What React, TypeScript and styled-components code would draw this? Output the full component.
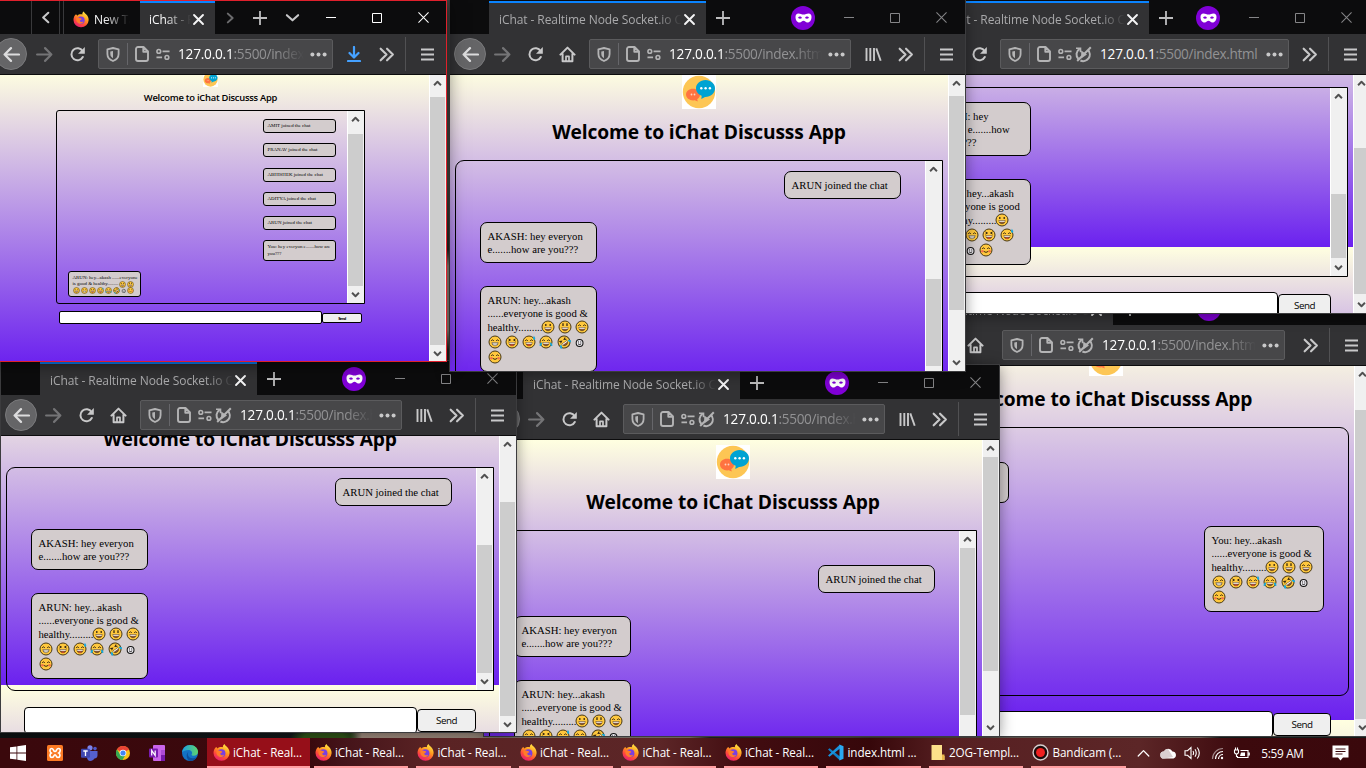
import React from "react";
import styled, { createGlobalStyle, css } from "styled-components";

const ui = `"Open Sans", "Noto Sans", sans-serif`;
const serif = `"Liberation Serif", "Times New Roman", serif`;

const GlobalStyle = createGlobalStyle`
  * { box-sizing: border-box; }
  body { margin: 0; overflow: hidden; background: #000; }
`;

const Desktop = styled.div`
  position: relative;
  width: 1366px;
  height: 768px;
  overflow: hidden;
  display: flex;
  flex-direction: column;
  justify-content: flex-end;
  font-family: ${ui};
  background:
    radial-gradient(ellipse 34px 12px at 324px 738px, #2f5518 60%, transparent) no-repeat,
    linear-gradient(90deg, #0c1112 0, #12181a 300px, #24351c 350px, #a08c7e 362px, #8f8278 690px, #20282a 710px, #6d6258 940px, #8a7d72 1200px, #1b2422 1220px) 0 732px / 100% 6px no-repeat,
    linear-gradient(#4a4b45 0, #53544a 180px, #2e2f2a 250px, #a8978a 266px, #a8978a 330px, #26231f 350px);
`;

/* ---------- window frame ---------- */

const Frame = styled.section<{ $x: number; $y: number; $w: number; $h: number; $z: number; $active?: boolean }>`
  position: absolute;
  left: ${(p) => p.$x}px;
  top: ${(p) => p.$y}px;
  width: ${(p) => p.$w}px;
  height: ${(p) => p.$h}px;
  z-index: ${(p) => p.$z};
  display: flex;
  flex-direction: column;
  background: #0c0c0d;
  box-shadow: ${(p) =>
    p.$active ? "0 0 0 1px #e0202c, 0 2px 18px rgba(0,0,0,.6)" : "0 0 0 1px #3c3c3e, 0 2px 14px rgba(0,0,0,.45)"};
`;

const TitleBar = styled.header<{ $active?: boolean }>`
  flex: none;
  height: ${(p) => (p.$active ? 33 : 34)}px;
  display: flex;
  padding-top: ${(p) => (p.$active ? 0 : 1)}px;
  background: #0c0c0d;
  overflow: hidden;
`;

const TabStrip = styled.div<{ $pad: number }>`
  display: flex;
  flex: 1;
  padding-left: ${(p) => p.$pad}px;
`;

const Tab = styled.div<{ $w: number; $active?: boolean; $pad?: number }>`
  flex: none;
  width: ${(p) => p.$w}px;
  display: flex;
  align-items: center;
  padding: 2px 10px 0 ${(p) => p.$pad ?? 10}px;
  border-top: 2px solid ${(p) => (p.$active ? "#0a84ff" : "transparent")};
  background: ${(p) => (p.$active ? "#323234" : "transparent")};
  color: #f4f4f5;
`;

const TabLabel = styled.span<{ $bright?: boolean }>`
  flex: 1;
  overflow: hidden;
  white-space: nowrap;
  font-size: 12px;
  line-height: 18px;
  letter-spacing: -0.08px;
  color: ${(p) => (p.$bright ? "#f9f9fa" : "#a9a9ab")};
  mask-image: linear-gradient(90deg, #000 calc(100% - 26px), transparent);
`;

const StripCell = styled.div<{ $w: number; $edge?: boolean }>`
  flex: none;
  width: ${(p) => p.$w}px;
  display: flex;
  align-items: center;
  justify-content: center;
  border-right: ${(p) => (p.$edge ? "1px solid #39393b" : "0")};
`;

const PrivateBadge = styled.span`
  align-self: center;
  display: flex;
  align-items: center;
  justify-content: center;
  width: 24px;
  height: 24px;
  margin: 1px 11px 0 0;
  border-radius: 50%;
  background: #8000d7;
`;

const Controls = styled.div<{ $active?: boolean }>`
  display: flex;
  flex: none;
  margin-right: ${(p) => (p.$active ? 0 : 1)}px;
  color: ${(p) => (p.$active ? "#fff" : "#858587")};
`;

const Control = styled.span`
  width: 46px;
  display: flex;
  align-items: center;
  justify-content: center;
`;

const NavBar = styled.nav<{ $pad: number }>`
  flex: none;
  height: 41px;
  display: flex;
  align-items: center;
  padding-left: ${(p) => p.$pad}px;
  background: #323234;
  border-bottom: 1px solid #0c0c0d;
  color: #c8c8c9;
`;

const NavCell = styled.span<{ $w: number; $dim?: boolean; $blue?: boolean }>`
  flex: none;
  width: ${(p) => p.$w}px;
  display: flex;
  align-items: center;
  justify-content: center;
  color: ${(p) => (p.$blue ? "#45a1ff" : p.$dim ? "#747476" : "inherit")};
`;

const BackButton = styled.span`
  flex: none;
  width: 32px;
  height: 32px;
  border-radius: 50%;
  border: 1px solid #7a7a7c;
  background: #656567;
  color: #dcdcdd;
  display: flex;
  align-items: center;
  justify-content: center;
`;

const UrlBar = styled.div<{ $w: number }>`
  flex: none;
  width: ${(p) => p.$w}px;
  height: 30px;
  display: flex;
  align-items: center;
  border: 1px solid #5b5b5d;
  border-radius: 2px;
  background: #474749;
  color: #b4b4b5;
`;

const UrlDivider = styled.span`
  width: 1px;
  height: 22px;
  background: #66666a;
`;

const UrlText = styled.span<{ $fade?: boolean; $gap: number }>`
  flex: 1;
  min-width: 0;
  margin-left: ${(p) => p.$gap}px;
  overflow: hidden;
  white-space: nowrap;
  font-size: 13.6px;
  line-height: 20px;
  letter-spacing: -0.34px;
  color: #929294;
  ${(p) => p.$fade && css`mask-image: linear-gradient(90deg, #000 calc(100% - 28px), transparent);`}
  b { font-weight: 400; color: #fff; letter-spacing: -0.2px; }
`;

const NavDivider = styled.span`
  flex: none;
  width: 1px;
  height: 34px;
  background: #515153;
`;

/* ---------- chat page ---------- */

const Viewport = styled.div`
  flex: 1;
  min-height: 0;
  display: flex;
  overflow: hidden;
`;

const Page = styled.main<{ $start: number; $len: number }>`
  flex: 1;
  min-width: 0;
  overflow: hidden;
  background: linear-gradient(#ffffe0, #6b21ef) 0 ${(p) => p.$start}px / 100% ${(p) => p.$len}px repeat-y;
`;

const PageBody = styled.div<{ $shift: number; $pad: number; $right?: number }>`
  display: flex;
  flex-direction: column;
  margin-top: ${(p) => p.$shift}px;
  padding: 5px ${(p) => p.$right ?? p.$pad}px 0 ${(p) => p.$pad}px;
`;

const LogoBox = styled.div<{ $size: number }>`
  align-self: center;
  flex: none;
  width: ${(p) => p.$size}px;
  height: ${(p) => p.$size}px;
  background: #fff;
  svg { display: block; width: 100%; height: 100%; }
`;

const Heading = styled.h1<{ $small?: boolean }>`
  flex: none;
  align-self: center;
  margin: 0;
  height: ${(p) => (p.$small ? 23 : 51)}px;
  white-space: nowrap;
  font-family: ${ui};
  font-weight: ${(p) => (p.$small ? 600 : 700)};
  font-size: ${(p) => (p.$small ? 9.4 : 19.2)}px;
  letter-spacing: ${(p) => (p.$small ? -0.25 : -0.1)}px;
  line-height: ${(p) => (p.$small ? 22 : 46)}px;
  color: #000;
`;

const ChatBox = styled.div<{ $h: number; $bar?: boolean; $small?: boolean }>`
  flex: none;
  height: ${(p) => p.$h}px;
  display: flex;
  border: 1px solid #000;
  border-radius: ${(p) => (p.$small ? "3px 0 0 3px" : p.$bar ? "9px 0 0 9px" : "9px")};
  overflow: hidden;
`;

const Feed = styled.div<{ $top: number; $gap: number; $side: number; $sideR: number }>`
  flex: 1;
  display: flex;
  flex-direction: column;
  align-items: flex-start;
  gap: ${(p) => p.$gap}px;
  padding: ${(p) => p.$top}px ${(p) => p.$sideR}px 0 ${(p) => p.$side}px;
`;

const Bubble = styled.div<{ $w: number; $mine?: boolean; $small?: boolean }>`
  flex: none;
  width: ${(p) => p.$w}px;
  align-self: ${(p) => (p.$mine ? "flex-end" : "flex-start")};
  padding: ${(p) => (p.$small ? "3px 3.5px" : "6.5px 6.5px")};
  border: 1px solid #000;
  border-radius: ${(p) => (p.$small ? 3 : 7)}px;
  background: #d3cccd;
  font-family: ${serif};
  font-size: ${(p) => (p.$small ? 4.95 : 10.72)}px;
  color: #000;
`;

const Line = styled.div<{ $h: number }>`
  height: ${(p) => p.$h}px;
  line-height: ${(p) => p.$h}px;
  display: flex;
  align-items: center;
  white-space: pre;
`;

const LineText = styled.span<{ $tight?: boolean }>`
  margin-right: ${(p) => (p.$tight ? "-1.7px" : 0)};
`;

const Face = styled.svg<{ $s: number; $gap: number }>`
  flex: none;
  width: ${(p) => p.$s}px;
  height: ${(p) => p.$s}px;
  margin-right: ${(p) => p.$gap}px;
`;

const Form = styled.div<{ $top: number; $left: number }>`
  display: flex;
  align-items: flex-start;
  margin: ${(p) => p.$top}px 0 0 ${(p) => p.$left}px;
`;

const Entry = styled.div<{ $w: number; $h: number }>`
  flex: none;
  width: ${(p) => p.$w}px;
  height: ${(p) => p.$h}px;
  border: 1px solid #000;
  border-radius: ${(p) => (p.$h > 20 ? 4 : 2)}px;
  background: #fff;
`;

const SendButton = styled.div<{ $w: number; $h: number }>`
  flex: none;
  width: ${(p) => p.$w}px;
  height: ${(p) => p.$h}px;
  margin-top: ${(p) => (p.$h > 15 ? 1.5 : 2)}px;
  border: 1px solid #000;
  border-radius: ${(p) => (p.$h > 15 ? 4 : 2)}px;
  background: #efefef;
  display: flex;
  align-items: center;
  justify-content: center;
  font-size: ${(p) => (p.$h > 15 ? 9.8 : 4)}px;
  font-weight: ${(p) => (p.$h > 15 ? 400 : 700)};
  letter-spacing: -0.5px;
  color: #000;
`;

const Rail = styled.div`
  flex: none;
  width: 17px;
  display: flex;
  flex-direction: column;
  background: #f0f0f0;
  border-left: 1px solid #fff;
  overflow: hidden;
`;

const RailArrow = styled.span`
  flex: none;
  height: 17px;
  margin-right: 1px;
  display: flex;
  align-items: center;
  justify-content: center;
  color: #505050;
`;

const RailThumb = styled.span<{ $top: number; $h: number }>`
  flex: none;
  height: ${(p) => p.$h}px;
  margin: ${(p) => p.$top - 17}px 1px auto 0;
  background: #cdcdcd;
`;

/* ---------- taskbar ---------- */

const TaskBar = styled.footer`
  position: relative;
  z-index: 20;
  flex: none;
  height: 30px;
  display: flex;
  background: linear-gradient(90deg, #3a080c 0, #3a090d 310px, #45141a 345px, #5a2324 430px, #5c2627 660px, #420d11 740px, #36070a 870px, #572022 950px, #5c2627 1140px, #3c090d 1240px, #3a080c 1366px);
  color: #fff;
`;

const Pins = styled.div`
  width: 207px;
  display: flex;
  align-items: center;
`;

const Pin = styled.span<{ $w: number }>`
  width: ${(p) => p.$w}px;
  display: flex;
  justify-content: center;
`;

const Task = styled.div<{ $active?: boolean }>`
  flex: none;
  width: 102.5px;
  height: 30px;
  padding: 0 ${(p) => (p.$active ? 0 : 4)}px;
  background: ${(p) => (p.$active ? "#960f19" : "transparent")};
`;

const TaskInner = styled.div<{ $active?: boolean }>`
  height: 30px;
  display: flex;
  align-items: center;
  gap: 3.5px;
  padding-left: ${(p) => (p.$active ? 5.5 : 1)}px;
  border-bottom: 2px solid #ff9da0;
  white-space: nowrap;
  font-size: 11.7px;
  letter-spacing: -0.1px;
`;

const Tray = styled.div`
  flex: 1;
  display: flex;
  align-items: center;
`;

const TrayCell = styled.span<{ $w: number }>`
  flex: none;
  width: ${(p) => p.$w}px;
  display: flex;
  justify-content: center;
`;

const Clock = styled.span`
  flex: none;
  width: 56px;
  text-align: center;
  font-size: 11.8px;
  letter-spacing: -0.3px;
`;

const ShowDesktop = styled.span`
  width: 1px;
  height: 30px;
  margin-left: 13px;
  background: #8a6466;
`;

/* ---------- icons ---------- */

const Stroke = ({ s = 16, w = 2, d, cap = "round" }: { s?: number; w?: number; d: string; cap?: "round" | "butt" }) => (
  <svg width={s} height={s} viewBox="0 0 16 16" fill="none" stroke="currentColor" strokeWidth={w} strokeLinecap={cap} strokeLinejoin="round">
    <path d={d} />
  </svg>
);

const Cross = () => <Stroke s={13} w={2.4} d="M2.5 2.5l11 11M13.5 2.5l-11 11" />;

const Reload = () => (
  <svg width="17" height="17" viewBox="0 0 17 17" fill="none" stroke="currentColor" strokeWidth="2">
    <path d="M13.6 5.2A6 6 0 1 0 13.8 11" strokeLinecap="round" />
    <path d="M15.800 1v6.800H9z" fill="currentColor" stroke="none" />
  </svg>
);

const Home = () => (
  <svg width="17" height="17" viewBox="0 0 17 17" fill="none" stroke="currentColor" strokeWidth="2" strokeLinejoin="round" strokeLinecap="round">
    <path d="M1.400 8.600 8.500 1.600l7.100 7M3.600 8v7.200h9.800V8" />
    <path d="M7 15v-4.600h3V15" strokeWidth="1.700" />
  </svg>
);

const Shield = () => (
  <svg width="14" height="15" viewBox="0 0 14 15" fill="none" stroke="currentColor" strokeWidth="1.800">
    <path d="M7 1 12.600 2.300v4.600c0 3.600-2.400 5.800-5.600 7.100C3.800 12.700 1.400 10.500 1.400 6.900V2.300z" strokeLinejoin="round" />
    <path d="M7 4v7.200C5 10 4.300 8.600 4.300 6.900V4.600z" fill="currentColor" stroke="none" />
  </svg>
);

const Sheet = () => (
  <svg width="14" height="16" viewBox="0 0 14 16" fill="none" stroke="currentColor" strokeWidth="1.900" strokeLinejoin="round">
    <path d="M8.500 1H3a2 2 0 0 0-2 2v10a2 2 0 0 0 2 2h8a2 2 0 0 0 2-2V5.500zM8.300 1.200v4.600h4.600" />
  </svg>
);

const Permissions = () => (
  <svg width="15" height="13" viewBox="0 0 15 13" fill="none" stroke="currentColor" strokeWidth="1.700">
    <circle cx="3" cy="3.200" r="2" />
    <path d="M7 3.200h7.500M.5 9.600h6" strokeWidth="1.900" />
    <circle cx="11.700" cy="9.600" r="2" />
  </svg>
);

const Autoplay = () => (
  <svg width="17" height="17" viewBox="0 0 17 17" fill="none" stroke="currentColor">
    <path d="M4.600 2.800A6.600 6.600 0 0 0 3.400 13M13 4a6.600 6.600 0 0 1-7.600 10.500" strokeWidth="2" />
    <path d="M6.200 4.500 12 8.400l-5.800 4z" fill="currentColor" stroke="none" />
    <path d="M1 2.200h4.500v4" strokeWidth="1.600" />
    <path d="M15.800 1.200 2.200 15" strokeWidth="2" />
  </svg>
);

const Dots = () => (
  <svg width="17" height="5" viewBox="0 0 17 5" fill="#c8c8c9">
    <circle cx="2.400" cy="2.500" r="2" /><circle cx="8.500" cy="2.500" r="2" /><circle cx="14.600" cy="2.500" r="2" />
  </svg>
);

const Library = () => (
  <svg width="17" height="15" viewBox="0 0 17 15" fill="none" stroke="currentColor" strokeWidth="1.900">
    <path d="M1.500 1v13M5.300 1v13M9 1v13M11.300 1.400l4.400 12.400" />
  </svg>
);

const Mask = () => (
  <svg width="17" height="10" viewBox="0 0 17 10">
    <path fill="#fff" fillRule="evenodd" d="M3.500.5C5.500.5 6.500 1.600 8.500 1.600S11.500.5 13.500.5c2 0 3 1.200 3 3.500 0 3-1.600 5.500-4 5.500-2 0-2.600-1.700-4-1.700s-2 1.700-4 1.700C2.100 9.500.5 7 .5 4 .5 1.700 1.500.5 3.500.5zM3 4.800c1.200 1.200 2.700 1.200 4 .2C6 3.200 4 3 3 4.800zm7 .2c1.300 1 2.800 1 4-.2C13 3 11 3.200 10 5z" />
  </svg>
);

const Firefox = ({ s = 17 }: { s?: number }) => (
  <svg width={s} height={s} viewBox="0 0 17 17">
    <defs>
      <linearGradient id="fxBody" x1=".8" y1="0" x2=".25" y2="1">
        <stop offset="0" stopColor="#fff04a" /><stop offset=".4" stopColor="#ff9a1f" /><stop offset=".7" stopColor="#ff4a3a" /><stop offset="1" stopColor="#e6187a" />
      </linearGradient>
    </defs>
    <path fill="url(#fxBody)" d="M3.200 3c.6.500 1 .9 1.300 1.500.6-.7 1.500-1.300 2.600-1.500C8.400 2.800 9.500 3 10 3.200c-.3-1.200.2-2.500 1.600-3.200 0 1.500 2.400 2.400 3.700 4.400 1 1.600 1.400 3.200 1.300 4.800a8 8 0 0 1-8 7.600A8 8 0 0 1 .5 9C.5 6.700 1.600 4 3.200 3z" />
    <circle cx="8.400" cy="9.300" r="4" fill="#7a3fe0" />
    <path fill="#ff7b2a" d="M3.600 6.400c1.500-.5 2.900 0 3.600.7 1 .1 2 .1 2 .8 0 .7-1.700 1-2 1.800.4 1.500 2.300 1.900 4 1-1 2.600-4.600 3.200-6.500 1C3.500 10.400 3 8 3.600 6.400z" />
  </svg>
);

const Logo = () => (
  <svg viewBox="0 0 34 34">
    <circle cx="17" cy="17" r="16.200" fill="#fdc654" />
    <path fill="#ff7340" d="M11 13.800c4 0 7 2.600 7 5.800 0 2-1 3.600-2.800 4.700l.6 2.300-3-1.300C8 26 4 23.400 4 19.600c0-3.200 3-5.800 7-5.800z" />
    <path fill="#00a3d3" d="M23.500 5c5.400 0 9.500 3.700 9.500 8.300 0 5-4.400 8.700-10 8.600l-3.700 2.200.4-3.300c-3.500-1.200-5.700-4-5.700-7.500C14 8.700 18.200 5 23.500 5z" />
    <g fill="#fff"><circle cx="19.300" cy="13.300" r="1.200" /><circle cx="23.600" cy="13.300" r="1.200" /><circle cx="27.900" cy="13.300" r="1.200" /></g>
    <g fill="#ffd3c0"><circle cx="9.500" cy="19.500" r=".9" /><circle cx="12.500" cy="19.500" r=".9" /></g>
  </svg>
);

type Mood = "grin" | "open" | "smile" | "beam" | "squint" | "sweat" | "joy" | "rofl" | "plain" | "blush";

const Emoji = ({ m, s = 14, gap = 3.3 }: { m: Mood; s?: number; gap?: number }) => {
  if (m === "plain") {
    return (
      <Face $s={s * 0.74} $gap={gap} viewBox="0 0 10 10" fill="none" stroke="#111">
        <circle cx="5.400" cy="5.800" r="3.300" strokeWidth="1" fill="#eceaf0" />
        <path d="M3.900 6.600q1.500 1.500 3 0" strokeWidth=".9" />
        <path d="M4.300 4.300v1M6.500 4.300v1" strokeWidth=".9" />
      </Face>
    );
  }
  const arcs = m === "smile" || m === "beam" || m === "joy" || m === "sweat" || m === "blush";
  return (
    <Face $s={s} $gap={gap} viewBox="0 0 14 14" fill="none" stroke="#3a2a10" strokeWidth="1">
      <g transform={m === "rofl" ? "rotate(-35 7 7)" : undefined}>
        <circle cx="7" cy="7" r="6" fill="#ffc83d" stroke="#4a3a16" strokeWidth="1" />
        {(m === "grin" || m === "open") && <path d={m === "grin" ? "M4.800 4v2M9.200 4v2" : "M5 3.200v2.800M9 3.200v2.800"} strokeWidth="1.300" />}
        {arcs && <path d="M3.200 5.700q1.300-1.700 2.600 0M8.200 5.700q1.300-1.700 2.600 0" />}
        {(m === "squint" || m === "rofl") && <path d="M3.400 3.900 5.500 5 3.400 6.100M10.600 3.900 8.500 5l2.100 1.100" />}
        {m === "blush" ? (
          <>
            <circle cx="3.400" cy="8.200" r="1.200" fill="#f5704c" stroke="none" />
            <circle cx="10.600" cy="8.200" r="1.200" fill="#f5704c" stroke="none" />
            <path d="M4.800 8.400q2.200 2 4.400 0" />
          </>
        ) : (
          <>
            <path d="M3.800 7.600h6.400q-.4 3.200-3.200 3.200T3.800 7.600z" fill={m === "beam" ? "#fff" : "#8a5a3a"} strokeWidth=".5" />
            {m === "beam" ? <path d="M4 9h6" strokeWidth=".5" /> : <path d="M4.200 8.200h5.600" stroke="#fff" strokeWidth="1.100" />}
            {(m === "squint" || m === "sweat") && <path d="M5.700 10.200h2.600" stroke="#e8432e" strokeWidth="1.100" />}
          </>
        )}
        {m === "sweat" && <path d="M11.900.8q1.900 2.400 1.200 3.600-1.200 1-2.200-.3 0-1.200 1-3.300z" fill="#1aa7d8" stroke="none" />}
        {(m === "joy" || m === "rofl") && (
          <path d="M.6 9.800q.2-2 2.400-2.500.3 3-1.200 3.600T.6 9.800zM13.400 9.800q-.2-2-2.400-2.500-.3 3 1.200 3.600t1.200-1.100z" fill="#1aa7d8" stroke="none" />
        )}
      </g>
    </Face>
  );
};

/* ---------- composed parts ---------- */

const Scrollbar = ({ top, h }: { top: number; h: number }) => (
  <Rail>
    <RailArrow><Stroke s={11} w={2.8} cap="butt" d="M3 10.500 8 5.500l5 5" /></RailArrow>
    <RailThumb $top={top} $h={h} />
    <RailArrow><Stroke s={11} w={2.8} cap="butt" d="M3 5.500l5 5 5-5" /></RailArrow>
  </Rail>
);

const WindowControls = ({ active }: { active?: boolean }) => (
  <Controls $active={active}>
    <Control><Stroke s={10} w={1.6} cap="butt" d="M0 7.200h16" /></Control>
    <Control><Stroke s={10} w={1.6} cap="butt" d="M.8.8h14.400v14.400H.8z" /></Control>
    <Control><Stroke s={11} w={1.5} d="M1 1l14 14M15 1 1 15" /></Control>
  </Controls>
);

const Plus = () => (
  <svg width="14" height="14" viewBox="0 0 14 14" stroke="#bdbdbe" strokeWidth="1.800"><path d="M7 0v14M0 7h14" /></svg>
);

const PrivateTitle = () => (
  <TitleBar>
    <TabStrip $pad={39}>
      <Tab $w={217} $active>
        <TabLabel>iChat - Realtime Node Socket.io Chat</TabLabel>
        <StripCell $w={14}><Cross /></StripCell>
      </Tab>
      <StripCell $w={34}><Plus /></StripCell>
    </TabStrip>
    <PrivateBadge><Mask /></PrivateBadge>
    <WindowControls />
  </TitleBar>
);

const Url = ({ w, autoplay, fade, children }: { w: number; autoplay?: boolean; fade?: boolean; children: React.ReactNode }) => (
  <UrlBar $w={w}>
    <NavCell $w={28}><Shield /></NavCell>
    <UrlDivider />
    <NavCell $w={28}><Sheet /></NavCell>
    <NavCell $w={14}><Permissions /></NavCell>
    {autoplay && <NavCell $w={23}><Autoplay /></NavCell>}
    <UrlText $fade={fade} $gap={autoplay ? 5 : 8}><b>127.0.0.1</b>{children}</UrlText>
    <NavCell $w={28}><Dots /></NavCell>
  </UrlBar>
);

const Burger = () => (
  <svg width="13" height="13" viewBox="0 0 13 13" stroke="currentColor" strokeWidth="2"><path d="M0 1.500h13M0 6.500h13M0 11.500h13" /></svg>
);

const More = () => <Stroke s={17} w={2} d="M2.500 2.500 8 8l-5.500 5.500M8.500 2.500 14 8l-5.500 5.500" />;

const Tools = ({ library, lead = 10 }: { library?: boolean; lead?: number }) => (
  <>
    {library ? <NavCell $w={44}><Library /></NavCell> : <NavCell $w={lead} />}
    <NavCell $w={21}><More /></NavCell>
    <NavCell $w={8} />
    <NavDivider />
    <NavCell $w={42}><Burger /></NavCell>
  </>
);

const NavButtons = ({ home }: { home?: boolean }) => (
  <>
    <BackButton><Stroke s={17} w={2.1} d="M15 8H1.500M7.500 2 1.500 8l6 6" /></BackButton>
    <NavCell $w={33} $dim><Stroke s={17} w={2} d="M1 8h13.500M8.500 2l6 6-6 6" /></NavCell>
    <NavCell $w={32}><Reload /></NavCell>
    {home && <NavCell $w={32}><Home /></NavCell>}
  </>
);

type RowDef = [string, Mood[]?];

const Message = ({ w, rows, mine, small }: { w: number; rows: RowDef[]; mine?: boolean; small?: boolean }) => (
  <Bubble $w={w} $mine={mine} $small={small}>
    {rows.map(([t, faces], i) => (
      <Line key={i} $h={small ? 6.2 : faces ? 15 : 13}>
        {t && <LineText $tight={!!faces && !small}>{t}</LineText>}
        {faces?.map((m) => <Emoji key={m} m={m} s={small ? 7 : 14} gap={small ? 1 : 3.3} />)}
      </Line>
    ))}
  </Bubble>
);

const joined: RowDef[] = [["ARUN joined the chat"]];
const akash: RowDef[] = [["AKASH: hey everyon"], ["e.......how are you???"]];
const reply = (who: string): RowDef[] => [
  [`${who}: hey...akash`],
  ["......everyone is good &"],
  ["healthy.........", ["grin", "open", "smile"]],
  ["", ["beam", "squint", "sweat", "joy", "rofl", "plain"]],
  ["", ["blush"]],
];

interface ChatProps {
  start: number; len: number; shift: number; boxH: number; feedTop: number;
  pageBar: [number, number]; innerBar?: [number, number]; pad?: number;
  form?: [number, number, number, number]; children: React.ReactNode;
}

const Chat = ({ start, len, shift, boxH, feedTop, pageBar, innerBar, pad = 5, form, children }: ChatProps) => (
  <Viewport>
    <Page $start={start} $len={len}>
      <PageBody $shift={shift} $pad={pad}>
        <LogoBox $size={34}><Logo /></LogoBox>
        <Heading>Welcome to iChat Discusss App</Heading>
        <ChatBox $h={boxH} $bar={!!innerBar}>
          <Feed $top={feedTop} $gap={23} $side={24} $sideR={24}>{children}</Feed>
          {innerBar && <Scrollbar top={innerBar[0]} h={innerBar[1]} />}
        </ChatBox>
        {form && (
          <Form $top={form[0]} $left={form[1]}>
            <Entry $w={form[2]} $h={27} />
            <SendButton $w={form[3]} $h={23}>Send</SendButton>
          </Form>
        )}
      </PageBody>
    </Page>
    <Scrollbar top={pageBar[0]} h={pageBar[1]} />
  </Viewport>
);

const DimIcon = styled.span`
  display: flex;
  color: #6c6c6e;
`;

const NewTab = styled.span`
  display: flex;
  width: 36px;
  margin-left: 5px;
`;

const ChevronWrap = styled.span`
  display: flex;
  color: #c8c8c9;
`;

const Chevron = ({ d }: { d: string }) => <ChevronWrap><Stroke s={15} w={2.2} d={d} /></ChevronWrap>;

const smallNames = ["AMIT", "PRANAV", "ABHISHEK", "ADITYA", "ARUN"];

const MainWindow = () => (
  <Frame $x={-7} $y={1} $w={453} $h={360} $z={6} $active>
    <TitleBar $active>
      <TabStrip $pad={7}>
        <StripCell $w={32} $edge />
        <StripCell $w={28} $edge><Chevron d="M11 3 5.500 8l5.500 5" /></StripCell>
        <StripCell $w={4} $edge />
        <Tab $w={76} $pad={9}>
          <Firefox />
          <NewTab><TabLabel $bright>New Tab</TabLabel></NewTab>
        </Tab>
        <Tab $w={75} $active $pad={9}>
          <TabLabel $bright>iChat - Re</TabLabel>
          <StripCell $w={14}><Cross /></StripCell>
        </Tab>
        <StripCell $w={29}><DimIcon><Stroke s={14} w={2.3} d="M5.500 3 11 8l-5.500 5" /></DimIcon></StripCell>
        <StripCell $w={32}><Plus /></StripCell>
        <StripCell $w={32}><Chevron d="M2 5.500 8 11l6-5.500" /></StripCell>
      </TabStrip>
      <WindowControls active />
    </TitleBar>
    <NavBar $pad={2}>
      <BackButton><Stroke s={17} w={2.1} d="M15 8H1.500M7.500 2 1.500 8l6 6" /></BackButton>
      <NavCell $w={35} $dim><Stroke s={17} w={2} d="M1 8h13.500M8.500 2l6 6-6 6" /></NavCell>
      <NavCell $w={30}><Reload /></NavCell>
      <NavCell $w={6} />
      <Url w={235} fade>:5500/index.html</Url>
      <NavCell $w={42} $blue><Stroke s={16} w={2.2} d="M8 1v10M3.500 7 8 11.500 12.500 7M2 15h12" /></NavCell>
      <NavCell $w={22}><More /></NavCell>
      <NavCell $w={8} />
      <NavDivider />
      <NavCell $w={42}><Burger /></NavCell>
    </NavBar>
    <Viewport>
      <Page $start={-5} $len={295}>
        <PageBody $shift={-8} $pad={63} $right={64}>
          <LogoBox $size={15}><Logo /></LogoBox>
          <Heading $small>Welcome to iChat Discusss App</Heading>
          <ChatBox $h={194} $bar $small>
            <Feed $top={8} $gap={10.1} $side={11} $sideR={11}>
              {smallNames.map((n) => <Message key={n} w={73} small mine rows={[[`${n} joined the chat`]]} />)}
              <Message w={73} small mine rows={[["You: hey everyon e.......how are"], ["you???"]]} />
              <Message w={73} small rows={[
                ["ARUN: hey...akash ......everyone"],
                ["is good & healthy.........", ["grin", "open"]],
                ["", ["smile", "beam", "squint", "sweat", "joy", "rofl", "plain", "blush"]],
              ]} />
            </Feed>
            <Scrollbar top={23} h={152} />
          </ChatBox>
          <Form $top={7} $left={3}>
            <Entry $w={263} $h={13} />
            <SendButton $w={40} $h={10}>Send</SendButton>
          </Form>
        </PageBody>
      </Page>
      <Scrollbar top={22} h={248} />
    </Viewport>
  </Frame>
);

const chatTasks = Array.from({ length: 6 }, () => "iChat - Real...");

const Code = () => (
  <svg width="17" height="17" viewBox="0 0 17 17">
    <path d="M1 5.500 2.500 4.200 13 12.500V16.500z" fill="#0f7fc9" /><path d="M1 11.500 2.500 12.800 13 4.500V.5z" fill="#1a93dd" /><path d="M12.500.5 16.500 2.200v12.600l-4 1.700z" fill="#2aa9f2" />
  </svg>
);

const Folder = () => (
  <svg width="16" height="17" viewBox="0 0 15 17"><path d="M1 1h10.500v11H14v4H1z" fill="#fce08a" /><path d="M11.500 10.500H14V16h-2.500z" fill="#e8b84a" /></svg>
);

const Record = () => (
  <svg width="17" height="17" viewBox="0 0 16 16"><circle cx="8" cy="8" r="7" fill="#1b0b0b" stroke="#d6d0d0" strokeWidth="1.300" /><circle cx="8" cy="8" r="4.200" fill="#f02020" /></svg>
);

const PinIcons = () => (
  <Pins>
    <Pin $w={36}><svg width="16" height="16" viewBox="0 0 16 16" fill="#fff"><path d="M0 2.300 6.500 1.400v6.200H0zM7.300 1.300 16 0v7.600H7.300zM0 8.400h6.500v6.200L0 13.700zM7.300 8.400H16V16l-8.700-1.300z" /></svg></Pin>
    <Pin $w={37}><svg width="16" height="16" viewBox="0 0 16 16"><rect width="16" height="16" rx="1.500" fill="#fb7a24" /><path d="M4.500 3.500c2.500 0 1.500 3 3.500 3s1-3 3.500-3 2 3.500.3 4.500c1.700 1 1.700 4.500-.8 4.500S9.500 9.700 8 9.700s-.5 2.800-3 2.800S2.500 9 4.200 8C2.500 7 2.500 3.500 4.500 3.500z" fill="none" stroke="#fff" strokeWidth="1.600" /></svg></Pin>
    <Pin $w={32}><svg width="17" height="16" viewBox="0 0 17 16"><circle cx="9" cy="2.800" r="2.600" fill="#7b83eb" /><circle cx="14" cy="3.600" r="1.800" fill="#5059c9" /><path d="M6 6h10.500v4.500c0 2-1.500 3-3 3C12.500 15 11 16 9.500 16 7 16 6 14 6 12z" fill="#5560d0" /><rect x="0" y="3.800" width="9" height="9" rx="1" fill="#4048b0" /><path d="M2.300 6h4.400M4.500 6v5" stroke="#fff" strokeWidth="1.300" /></svg></Pin>
    <Pin $w={36}><svg width="14" height="14" viewBox="0 0 14 14"><circle cx="7" cy="7" r="7" fill="#fbc116" /><path d="M7 7 .9 3.500A7 7 0 0 1 13.100 3.500z" fill="#ea4335" /><path d="M.9 3.500A7 7 0 0 0 6.500 14L9.700 8.600 4.300 8.600z" fill="#34a853" /><circle cx="7" cy="7" r="3.300" fill="#fff" /><circle cx="7" cy="7" r="2.600" fill="#4285f4" /></svg></Pin>
    <Pin $w={32}><svg width="16" height="16" viewBox="0 0 16 16"><rect x="4" width="12" height="16" rx="1" fill="#ca64ea" /><rect x="12" y="5" width="4" height="5" fill="#ae4bd5" /><rect x="12" y="10" width="4" height="6" fill="#7719aa" /><rect y="3.500" width="9" height="9" rx="1" fill="#7a1bb0" /><path d="M2.700 10.500V5.500l3.500 5V5.500" stroke="#fff" strokeWidth="1.200" fill="none" /></svg></Pin>
    <Pin $w={34}><svg width="16" height="16" viewBox="0 0 16 16"><defs><linearGradient id="edgeTop" x1="0" x2="1"><stop offset="0" stopColor="#1b9de2" /><stop offset="1" stopColor="#5fd66b" /></linearGradient></defs><circle cx="8" cy="8" r="8" fill="#1372c4" /><path d="M0 7.500C.5 3 4 0 8 0c5 0 8 3.500 8 6.800 0 2.500-2 4-4.300 4-1.600 0-2.600-.6-2-1.500C11 7.300 9 5 6.500 5 3.500 5 1 6 0 7.500z" fill="url(#edgeTop)" /><path d="M7 6.500C4.500 8.500 6 14 11.500 13.200c1.500-.2 2.500-.7 3.200-1.200C13.500 14.500 11 16 8.200 16 4 14.500 3.500 8.500 7 6.500z" fill="#0c4f9c" /></svg></Pin>
  </Pins>
);

const TrayIcons = () => (
  <Tray>
    <TrayCell $w={28}><Stroke s={13} w={1.6} d="M1.500 11 8 4.500l6.500 6.500" /></TrayCell>
    <TrayCell $w={22}><svg width="17" height="11" viewBox="0 0 17 11"><path d="M4 10.500a3.500 3.500 0 0 1-.3-7A5 5 0 0 1 12.500 3.500 3.600 3.600 0 0 1 13.500 10.500z" fill="#fff" /><path d="M4 10.500a3.500 3.500 0 0 1-.3-7A5 5 0 0 1 8 1L13 9z" fill="#d9cfd0" /></svg></TrayCell>
    <TrayCell $w={26}><svg width="17" height="14" viewBox="0 0 17 14" fill="none" stroke="#fff" strokeWidth="1.100"><path d="M1 4.700h2.500L7 1.500v11L3.500 9.300H1zM9 5q1.200 2 0 4M11 3.300q2.500 3.700 0 7.400M13.300 1.500q4 5.500 0 11" /></svg></TrayCell>
    <TrayCell $w={24}><svg width="14" height="14" viewBox="0 0 14 14" fill="none" stroke="#fff" strokeWidth="1.200"><circle cx="11" cy="12" r="1.200" fill="#fff" stroke="none" /><path d="M7.500 13a4.500 4.500 0 0 1 4.500-4.500M4.500 13A7.500 7.500 0 0 1 12 5.500" /><path d="M1.500 13A10.500 10.500 0 0 1 12 2.500" opacity=".5" /></svg></TrayCell>
    <TrayCell $w={23}><svg width="17" height="13" viewBox="0 0 17 13" fill="none" stroke="#fff" strokeWidth="1.100"><path d="M7.500 3.500H15v7H4.500V9M15.300 6h1v2h-1" /><path d="M8 5.500h4v3.500H7z" fill="#fff" stroke="none" /><path d="M1.500 3h4v2.500q-.5 1.500-2 1.500t-2-1.500zM2.500.5V3M4.500.5V3M3.500 7v3" /></svg></TrayCell>
    <NavCell $w={2} />
    <Clock>5:59 AM</Clock>
    <NavCell $w={15} />
    <TrayCell $w={30}><svg width="17" height="16" viewBox="0 0 17 16"><path d="M.5.5h16v12H11L8.500 15.500 6 12.500H.5z" fill="#fff" /><path d="M3.500 4h10M3.500 6.500h10M3.500 9h7" stroke="#3a080c" strokeWidth="1.100" /></svg></TrayCell>
    <ShowDesktop />
  </Tray>
);

export default function App() {
  return (
    <Desktop>
      <GlobalStyle />

      <Frame $x={857} $y={291} $w={514} $h={445} $z={1}>
        <PrivateTitle />
        <NavBar $pad={5}>
          <NavButtons home />
          <NavCell $w={11} />
          <Url w={283} autoplay fade>:5500/index.html</Url>
          <Tools lead={15} />
        </NavBar>
        <Chat start={-28} len={382} shift={-29} boxH={269} feedTop={34} pageBar={[44, 309]} form={[15, 18, 393, 58]}>
          <Message w={122} rows={akash} />
          <Message w={120} mine rows={reply("You")} />
        </Chat>
      </Frame>

      <Frame $x={484} $y={365} $w={515} $h={371} $z={2}>
        <PrivateTitle />
        <NavBar $pad={4}>
          <NavButtons home />
          <NavCell $w={6} />
          <Url w={262} autoplay fade>:5500/index.html</Url>
          <Tools library />
        </NavBar>
        <Chat start={0} len={309} shift={0} boxH={224} feedTop={34} pageBar={[17, 214]} innerBar={[17, 167]}>
          <Message w={117} mine rows={joined} />
          <Message w={117} rows={akash} />
          <Message w={117} rows={reply("ARUN")} />
        </Chat>
      </Frame>

      <Frame $x={1} $y={361} $w={515} $h={371} $z={3}>
        <PrivateTitle />
        <NavBar $pad={4}>
          <NavButtons home />
          <NavCell $w={6} />
          <Url w={262} autoplay fade>:5500/index.html</Url>
          <Tools library />
        </NavBar>
        <Chat start={-60} len={309} shift={-59} boxH={224} feedTop={10} pageBar={[66, 214]} innerBar={[77, 128]} form={[16, 18, 393, 59]}>
          <Message w={117} mine rows={joined} />
          <Message w={117} rows={akash} />
          <Message w={117} rows={reply("ARUN")} />
        </Chat>
      </Frame>

      <Frame $x={893} $y={0} $w={477} $h={313} $z={4}>
        <PrivateTitle />
        <NavBar $pad={5}>
          <NavButtons />
          <NavCell $w={5} />
          <Url w={289} autoplay>:5500/index.html</Url>
          <Tools lead={10} />
        </NavBar>
        <Chat start={-79} len={251} shift={-78} boxH={190} feedTop={14} pageBar={[73, 146]} innerBar={[106, 64]} form={[15, 18, 362, 53]}>
          <Message w={108} rows={[["AKASH: hey"], ["everyon e.......how"], ["are you???"]]} />
          <Message w={108} rows={[
            ["ARUN: hey...akash"],
            ["......everyone is good"],
            ["& healthy.........", ["grin"]],
            ["", ["open", "smile", "beam", "squint", "sweat"]],
            ["", ["joy", "rofl", "plain", "blush"]],
          ]} />
        </Chat>
      </Frame>

      <Frame $x={450} $y={0} $w={515} $h={371} $z={5}>
        <PrivateTitle />
        <NavBar $pad={4}>
          <NavButtons home />
          <NavCell $w={6} />
          <Url w={262} fade>:5500/index.html</Url>
          <Tools library />
        </NavBar>
        <Chat start={-5} len={309} shift={-5} boxH={224} feedTop={10} pageBar={[21, 214]} innerBar={[118, 87]}>
          <Message w={117} mine rows={joined} />
          <Message w={117} rows={akash} />
          <Message w={117} rows={reply("ARUN")} />
        </Chat>
      </Frame>

      <MainWindow />

      <TaskBar>
        <PinIcons />
        {chatTasks.map((t, i) => (
          <Task key={i} $active={i === 0}>
            <TaskInner $active={i === 0}><Firefox />{t}</TaskInner>
          </Task>
        ))}
        <Task><TaskInner><Code />index.html ...</TaskInner></Task>
        <Task><TaskInner><Folder />2OG-Templ...</TaskInner></Task>
        <Task><TaskInner><Record />Bandicam (...</TaskInner></Task>
        <TrayIcons />
      </TaskBar>
    </Desktop>
  );
}
